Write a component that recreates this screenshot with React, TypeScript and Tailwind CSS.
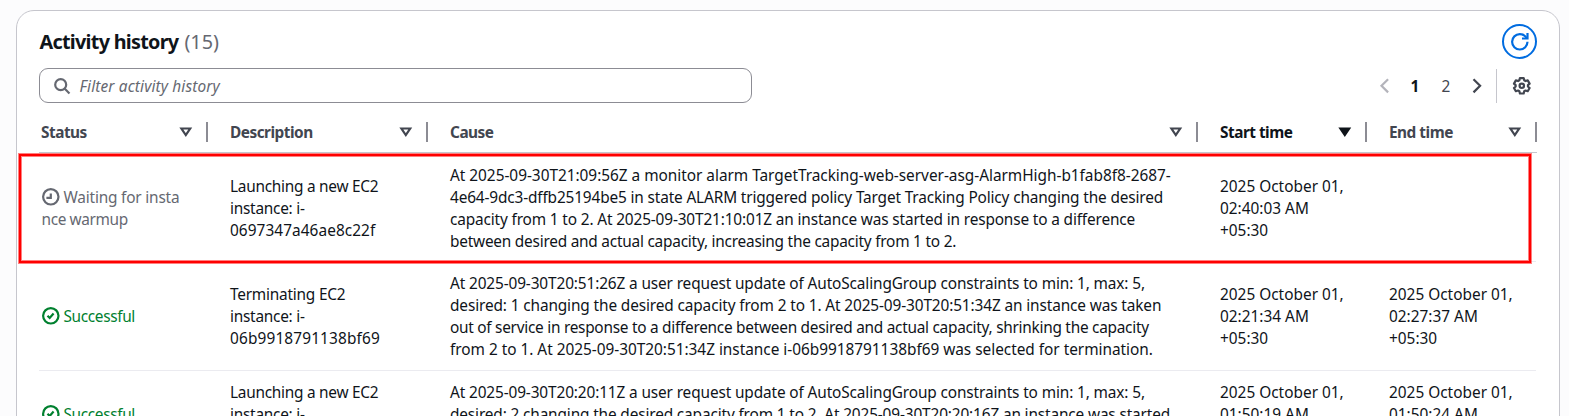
import type { ReactNode } from "react";

type Status = "waiting" | "success";
type Line = [text: string, tracking?: string];

interface Activity {
  status: Status;
  description: Line[];
  cause: Line[];
  start: Line[];
  end: Line[];
  height: string;
}

const activities: Activity[] = [
  {
    status: "waiting",
    description: [
      ["Launching a new EC2", "tracking-[-0.26px]"],
      ["instance: i-", "tracking-[-0.25px]"],
      ["0697347a46ae8c22f", "tracking-[0.06px]"],
    ],
    cause: [
      ["At 2025-09-30T21:09:56Z a monitor alarm TargetTracking-web-server-asg-AlarmHigh-b1fab8f8-2687-", "tracking-[-0.025px]"],
      ["4e64-9dc3-dffb25194be5 in state ALARM triggered policy Target Tracking Policy changing the desired", "tracking-[-0.15px]"],
      ["capacity from 1 to 2. At 2025-09-30T21:10:01Z an instance was started in response to a difference", "tracking-[-0.15px]"],
      ["between desired and actual capacity, increasing the capacity from 1 to 2.", "tracking-[-0.23px]"],
    ],
    start: [["2025 October 01,"], ["02:40:03 AM"], ["+05:30"]],
    end: [],
    height: "h-[109px] pt-[3px]",
  },
  {
    status: "success",
    description: [
      ["Terminating EC2", "tracking-[-0.22px]"],
      ["instance: i-", "tracking-[-0.25px]"],
      ["06b9918791138bf69", "tracking-[0.14px]"],
    ],
    cause: [
      ["At 2025-09-30T20:51:26Z a user request update of AutoScalingGroup constraints to min: 1, max: 5,", "tracking-[-0.13px]"],
      ["desired: 1 changing the desired capacity from 2 to 1. At 2025-09-30T20:51:34Z an instance was taken", "tracking-[-0.125px]"],
      ["out of service in response to a difference between desired and actual capacity, shrinking the capacity", "tracking-[-0.27px]"],
      ["from 2 to 1. At 2025-09-30T20:51:34Z instance i-06b9918791138bf69 was selected for termination.", "tracking-[-0.025px]"],
    ],
    start: [["2025 October 01,"], ["02:21:34 AM"], ["+05:30"]],
    end: [["2025 October 01,"], ["02:27:37 AM"], ["+05:30"]],
    height: "h-[109px] pt-[2px]",
  },
  {
    status: "success",
    description: [
      ["Launching a new EC2", "tracking-[-0.26px]"],
      ["instance: i-", "tracking-[-0.25px]"],
    ],
    cause: [
      ["At 2025-09-30T20:20:11Z a user request update of AutoScalingGroup constraints to min: 1, max: 5,", "tracking-[-0.13px]"],
      ["desired: 2 changing the desired capacity from 1 to 2. At 2025-09-30T20:20:16Z an instance was started", "tracking-[-0.145px]"],
    ],
    start: [["2025 October 01,"], ["01:50:19 AM"]],
    end: [["2025 October 01,"], ["01:50:24 AM"]],
    height: "h-[65px] pt-[2px]",
  },
];

function Lines({ lines }: { lines: Line[] }) {
  return (
    <div className="whitespace-nowrap">
      {lines.map(([text, tracking = "tracking-normal"]) => (
        <div key={text} className={tracking}>
          {text}
        </div>
      ))}
    </div>
  );
}

function Icon({ children, className = "" }: { children: ReactNode; className?: string }) {
  return (
    <svg
      viewBox="0 0 16 16"
      fill="none"
      stroke="currentColor"
      strokeWidth="2"
      className={`size-[17.6px] shrink-0 overflow-visible ${className}`}
    >
      {children}
    </svg>
  );
}

function StatusCell({ status, last }: { status: Status; last: boolean }) {
  if (status === "waiting") {
    return (
      <div className="pl-[0.5px] whitespace-nowrap text-[#656871]">
        <div className="flex items-center gap-[4.4px] tracking-[-0.19px]">
          <Icon className="-mt-0.5">
            <circle cx="8" cy="8" r="7" />
            <path d="M8 5v4H4" />
          </Icon>
          <span>Waiting for insta</span>
        </div>
        <div className="tracking-[-0.38px]">nce warmup</div>
      </div>
    );
  }
  return (
    <div
      className={`flex items-center gap-[4.4px] pl-[0.5px] tracking-[-0.35px] text-[#00802f] ${
        last ? "pt-[22px]" : ""
      }`}
    >
      <Icon className="-mt-0.5">
        <circle cx="8" cy="8" r="7" />
        <path d="m5 8 2 2 3.52-4" />
      </Icon>
      <span>Successful</span>
    </div>
  );
}

function HeaderCell({ label, sorted = false }: { label: string; sorted?: boolean }) {
  return (
    <div
      className={`flex h-5 items-center justify-between border-r-2 border-[#8c8c94] pr-[11px] ${
        sorted ? "text-[#0f141a]" : "text-[#424650]"
      }`}
    >
      <span className="pt-px">{label}</span>
      <Icon>
        <path d="M4 5h8l-4 6-4-6Z" fill={sorted ? "currentColor" : "none"} />
      </Icon>
    </div>
  );
}

export default function App() {
  return (
    <div className="relative h-[416px] w-[1569px] overflow-hidden bg-[#fcfcfd] pt-2.5 pl-4 font-['Noto_Sans',sans-serif] text-[15.4px] leading-[22px] text-[#0f141a]">
      <div className="h-[440px] w-[1544px] rounded-t-[18px] border border-[#c6c6cd] bg-white px-[22px]">
        <div className="flex h-[57px] items-center justify-between pt-1">
          <h2 className="flex gap-[5px] text-[19.8px]">
            <span className="pl-[0.5px] font-bold tracking-[-0.72px]">Activity history</span>
            <span className="pl-px text-[#656871]">(15)</span>
          </h2>
          <button className="flex size-[35px] items-center justify-center rounded-full border-2 border-[#006ce0] text-[#006ce0]">
            <Icon>
              <path d="M15 8c0 3.87-3.13 7-7 7s-7-3.13-7-7 3.13-7 7-7c2.79 0 5.2 1.63 6.33 4" />
              <path d="M10 5h5V0" />
            </Icon>
          </button>
        </div>

        <div className="flex h-[35px] items-center justify-between">
          <div className="flex h-[35px] w-[713px] items-center gap-[9px] rounded-[9px] border border-[#8c8c94] pl-[13px] text-[#656871]">
            <Icon>
              <circle cx="7" cy="7" r="5" />
              <path d="m15 15-4.5-4.5" />
            </Icon>
            <span className="pt-0.5 tracking-[0.14px] italic">Filter activity history</span>
          </div>
          <div className="flex h-full items-center text-[#424650]">
            <Icon className="-mr-px text-[#b4b4bb]">
              <path d="m11 2-6 6 6 6" />
            </Icon>
            <span className="w-[44px] pt-0.5 text-center font-bold text-[#0f141a]">1</span>
            <span className="w-[18px] pt-0.5 text-center">2</span>
            <Icon className="ml-[13px]">
              <path d="m5 2 6 6-6 6" />
            </Icon>
            <span className="mr-4 ml-[11px] h-[34px] w-px bg-[#c6c6cd]" />
            <Icon className="mr-1.5">
              <path
                strokeLinejoin="round"
                d="M6.3 1h3.4l.5 2 1.2.7 2-.6 1.7 2.9-1.5 1.4v1.2l1.5 1.4-1.7 2.9-2-.6-1.2.7-.5 2H6.3l-.5-2-1.2-.7-2 .6L.9 10l1.5-1.4V7.4L.9 6l1.7-2.900 2 .6L5.800 3z"
              />
              <circle cx="8" cy="8" r="2" />
            </Icon>
          </div>
        </div>

        <div className="h-[50px] w-[1498px] border-b border-[#c6c6cd] pt-[19px] pl-0.5 font-bold tracking-[-0.5px]">
          <div className="grid grid-cols-[167px_198px_748px_147px_148px] gap-x-[22px]">
            <HeaderCell label="Status" />
            <HeaderCell label="Description" />
            <HeaderCell label="Cause" />
            <HeaderCell label="Start time" sorted />
            <HeaderCell label="End time" />
          </div>
        </div>

        {activities.map((a, i) => (
          <div
            key={a.start[1][0]}
            className={`grid w-[1497px] grid-cols-[189px_220px_770px_169px_147px] items-center border-b border-[#ebebf0] pl-0.5 ${a.height}`}
          >
            <StatusCell status={a.status} last={i === activities.length - 1} />
            <Lines lines={a.description} />
            <Lines lines={a.cause} />
            <Lines lines={a.start} />
            <Lines lines={a.end} />
          </div>
        ))}
      </div>
      <div className="absolute top-[154px] left-[19px] h-[109px] w-[1512px] border-2 border-[#ff0000] shadow-[0_0_0_1px_#ff000080,inset_0_0_0_1px_#ff000080]" />
    </div>
  );
}
